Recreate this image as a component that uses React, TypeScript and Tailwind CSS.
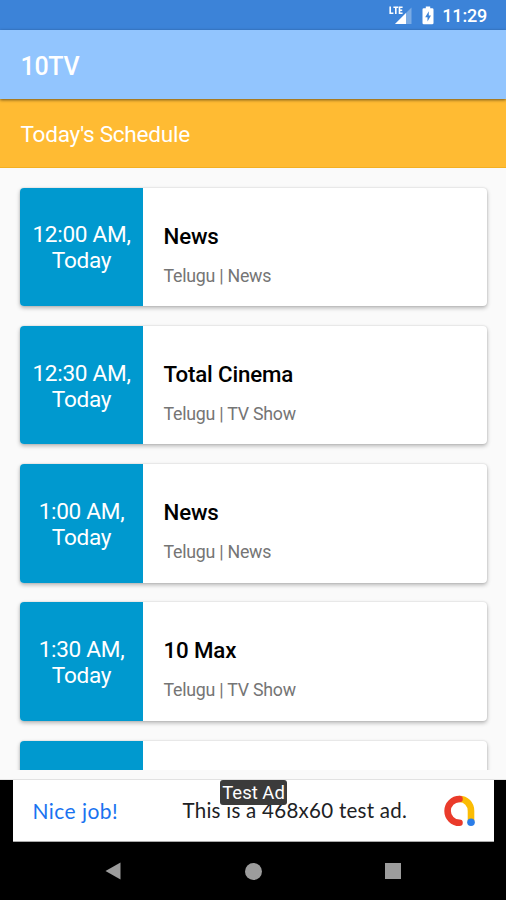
import React from "react";

type Program = { time: string; title: string; meta: string };

const programs: Program[] = [
  { time: "12:00 AM,", title: "News", meta: "Telugu | News" },
  { time: "12:30 AM,", title: "Total Cinema", meta: "Telugu | TV Show" },
  { time: "1:00 AM,", title: "News", meta: "Telugu | News" },
  { time: "1:30 AM,", title: "10 Max", meta: "Telugu | TV Show" },
];

const cardClass =
  "flex h-[118.5px] shrink-0 overflow-hidden rounded-[4px] bg-white shadow-[0_2px_4px_rgba(0,0,0,0.28),0_0_2px_rgba(0,0,0,0.14)]";

function StatusBar() {
  return (
    <header className="flex h-[30px] shrink-0 items-center justify-end bg-[#3c83d8] pr-[19px] text-white">
      <svg width="24" height="20" viewBox="0 0 24 20" className="mt-[2px]">
        <path d="M22.5 1.5V18H6Z" fill="#fff" fillOpacity="0.32" />
        <path d="M17 7V18H6Z" fill="#fff" />
        <path d="M0 0H15V6L12 9.3H0Z" fill="#3c83d8" />
        <path
          d="M1.2 0.6V7.3H4.4M4.4 1.3H9.2M6.8 1.3V8M13.6 1.3H10.5V7.3H13.6M10.5 4.3H13.2"
          fill="none"
          stroke="#fff"
          strokeWidth="1.6"
        />
      </svg>
      <svg width="12" height="19" viewBox="0 0 12 19" className="ml-[9px]">
        <path
          d="M3.8 0.5H8.2V2.3H10.2Q11.5 2.3 11.5 3.6V17Q11.5 18.3 10.2 18.3H1.8Q0.5 18.3 0.5 17V3.6Q0.5 2.3 1.8 2.3H3.8Z"
          fill="#fff"
        />
        <path d="M6.8 5.3L3.2 11.2H5.5V15.5L9 9.4H6.8Z" fill="#3c83d8" />
      </svg>
      <span className="ml-[8px] mt-[2px] text-[18px] leading-none font-medium tracking-[-0.2px]">11:29</span>
    </header>
  );
}

function ProgramCard({ time, title, meta }: Program) {
  return (
    <article className={cardClass}>
      <div className="flex w-[123px] shrink-0 flex-col items-center justify-center bg-[#0099cf] pt-[3px] text-[22.6px] leading-[26px] tracking-[-0.3px] whitespace-nowrap text-white">
        <span>{time}</span>
        <span>Today</span>
      </div>
      <div className="flex flex-col pt-[35px] pl-[20.5px]">
        <h2 className="text-[22.3px] leading-[27px] font-medium tracking-[-0.15px] text-black">{title}</h2>
        <p className="mt-[15px] text-[17.8px] leading-[21px] tracking-[-0.25px] text-[#757575]">{meta}</p>
      </div>
    </article>
  );
}

function AdBanner() {
  return (
    <div className="flex h-[62px] shrink-0 justify-center bg-black">
      <div className="relative flex w-[481px] items-center border-b border-[#aaa] bg-white font-['Lato','Roboto',sans-serif]">
        <span className="ml-[20px] w-[150px] text-[21px] tracking-[0.45px] whitespace-nowrap text-[#1a73f0]">Nice job!</span>
        <span className="w-[260px] text-[20.5px] tracking-[0.27px] whitespace-nowrap text-[#202124]">
          This is a 468x60 test ad.
        </span>
        <svg width="34" height="34" viewBox="0 0 34 34" fill="none" className="shrink-0" strokeLinecap="round">
          <path d="M16.5 5C23 5 28 10 28 17V27" stroke="#fbbc04" strokeWidth="6.6" />
          <path d="M16.5 5A11.9 11.9 0 1 0 16.5 28.8" stroke="#ea3b2b" strokeWidth="6.6" />
          <circle cx="28" cy="28.3" r="3.8" fill="#2b7de9" />
        </svg>
        <span className="absolute top-0 left-[207.5px] h-[25px] w-[67px] rounded-[3px] bg-[#3b3b3b] text-center font-['Roboto',sans-serif] text-[18.5px] leading-[27px] whitespace-nowrap text-white">
          Test Ad
        </span>
      </div>
    </div>
  );
}

function NavigationBar() {
  return (
    <nav className="flex h-[58px] shrink-0 items-center justify-between bg-black px-[105px] text-[#9c9c9c]">
      <svg width="16" height="18" viewBox="0 0 16 18" fill="currentColor">
        <path d="M0.5 9L15.5 0.5V17.5Z" />
      </svg>
      <span className="size-[17px] rounded-full bg-current" />
      <span className="size-[16px] bg-current" />
    </nav>
  );
}

export default function App() {
  return (
    <div className="flex h-[900px] w-[506px] flex-col overflow-hidden bg-[#fafafa] font-['Roboto',sans-serif]">
      <StatusBar />
      <div className="z-10 flex h-[69px] shrink-0 items-center bg-[#92c5fe] pl-[20.5px] pt-[4px] text-[25px] font-medium tracking-[-0.3px] text-white shadow-[0_1px_3px_rgba(0,0,0,0.55)]">
        10TV
      </div>
      <div className="flex h-[68.5px] shrink-0 items-center border-b border-[#f3b022] bg-[#ffbb33] pt-[4px] pl-[20.5px] text-[22.6px] tracking-[-0.27px] text-white">
        Today's Schedule
      </div>
      <main className="flex h-[602.5px] shrink-0 flex-col gap-[19.8px] overflow-hidden pt-[20px] pr-[19px] pl-[20px]">
        {programs.map((program) => (
          <ProgramCard key={program.time} {...program} />
        ))}
        <div className={cardClass}>
          <div className="w-[123px] bg-[#0099cf]" />
        </div>
      </main>
      <div className="h-[10px] shrink-0 border-b border-[#e2e2e2]" />
      <AdBanner />
      <NavigationBar />
    </div>
  );
}
